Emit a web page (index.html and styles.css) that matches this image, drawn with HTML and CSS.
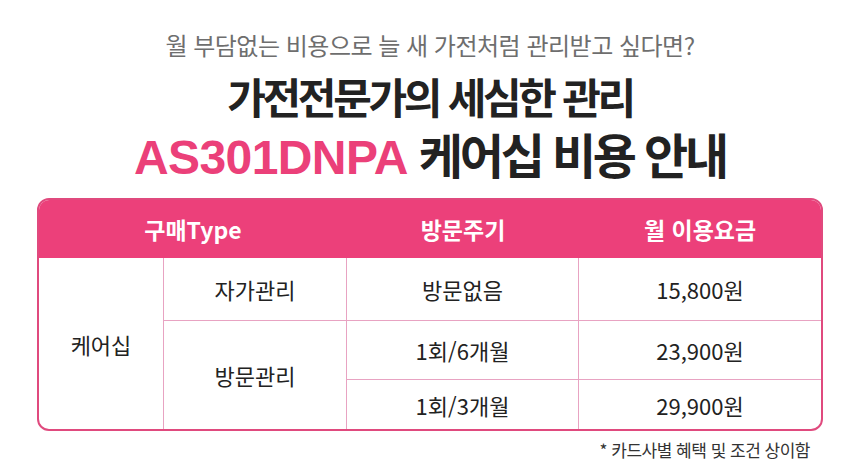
FILE: index.html
```html
<!DOCTYPE html>
<html lang="ko">
<head>
<meta charset="utf-8">
<title>AS301DNPA 케어십 비용 안내</title>
<link rel="stylesheet" href="styles.css">
</head>
<body>
<main class="page">
  <p class="sub">월 부담없는 비용으로 늘 새 가전처럼 관리받고 싶다면?</p>
  <h1 class="title">가전전문가의 세심한 관리</h1>
  <h2 class="title2"><span class="model">AS301DNPA </span><span class="ko">케어십 비용 안내</span></h2>

  <div class="table">
    <div class="th span2">구매Type</div>
    <div class="th">방문주기</div>
    <div class="th last">월 이용요금</div>

    <div class="td care">케어십</div>
    <div class="td r1">자가관리</div>
    <div class="td r1">방문없음</div>
    <div class="td r1 last">15,800원</div>

    <div class="td visit">방문관리</div>
    <div class="td r2">1회/6개월</div>
    <div class="td r2 last">23,900원</div>
    <div class="td r3">1회/3개월</div>
    <div class="td r3 last">29,900원</div>
  </div>

  <p class="note">* 카드사별 혜택 및 조건 상이함</p>
</main>
</body>
</html>
```

FILE: styles.css
```css
* { box-sizing: border-box; }
html, body { margin: 0; padding: 0; background: #ffffff; }
body {
  font-family: "Noto Sans CJK KR", "Noto Sans", sans-serif;
  color: #222;
}
.page {
  width: 860px;
  padding-top: 30px;
  display: flex;
  flex-direction: column;
  align-items: center;
}
.sub {
  margin: 0;
  height: 30px;
  font-size: 24px;
  line-height: 30px;
  letter-spacing: -0.5px;
  color: #6e6e6e;
  font-weight: 400;
}
.title {
  margin: 12px 0 0;
  height: 48px;
  font-size: 42px;
  line-height: 48px;
  font-weight: 700;
  letter-spacing: -3.3px;
  color: #222;
}
.title2 {
  margin: 6px 0 0;
  height: 54px;
  font-size: 48px;
  line-height: 54px;
  font-weight: 700;
  color: #222;
  white-space: nowrap;
}
.model {
  font-family: "Liberation Sans", "Noto Sans CJK KR", sans-serif;
  color: #eb4079;
  letter-spacing: -0.6px;
}
.ko { letter-spacing: -3.2px; }

.table {
  margin-top: 18px;
  width: 786px;
  display: grid;
  grid-template-columns: 125px 183px 232px 1fr;
  grid-template-rows: 58px 63px 59px 49px;
  border: 2px solid #e04a7e;
  border-radius: 12px;
  overflow: hidden;
}
.th {
  background: #ec407a;
  color: #fff;
  font-size: 23px;
  font-weight: 700;
  display: flex;
  align-items: center;
  justify-content: center;
}
.th.span2 { grid-column: 1 / 3; }
.td {
  display: flex;
  align-items: center;
  justify-content: center;
  font-size: 22px;
  color: #222;
  border-right: 1px solid #e8a3c2;
  border-bottom: 1px solid #e8a3c2;
}
.td.last { border-right: 0; }
.care { grid-column: 1; grid-row: 2 / 5; border-bottom: 0; }
.visit { grid-column: 2; grid-row: 3 / 5; border-bottom: 0; }
.r3 { border-bottom: 0; }

.note {
  align-self: flex-end;
  margin: 8px 50px 0 0;
  font-size: 17px;
  line-height: 22px;
  letter-spacing: -0.5px;
  color: #333;
}
```
